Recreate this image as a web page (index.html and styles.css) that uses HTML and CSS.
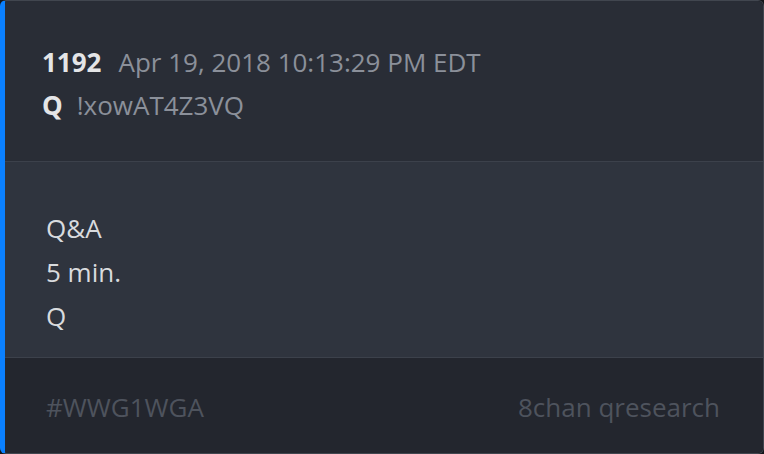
FILE: index.html
```html
<!DOCTYPE html>
<html>
<head>
<meta charset="utf-8">
<link rel="stylesheet" href="styles.css">
</head>
<body>
<div class="card">
  <div class="head">
    <div class="line"><span class="num">1192</span><span class="meta">Apr 19, 2018 10:13:29 PM EDT</span></div>
    <div class="line"><span class="num author">Q</span><span class="meta">!xowAT4Z3VQ</span></div>
  </div>
  <div class="body">
    <div class="line">Q&amp;A</div>
    <div class="line">5 min.</div>
    <div class="line">Q</div>
  </div>
  <div class="foot">
    <span>#WWG1WGA</span>
    <span>8chan qresearch</span>
  </div>
</div>
</body>
</html>
```
FILE: styles.css
```css
html, body {
  margin: 0;
  padding: 0;
  background: #14161a;
}
body {
  width: 764px;
  height: 454px;
  font-family: "Open Sans", "Noto Sans", sans-serif;
  font-size: 26px;
}
.card {
  box-sizing: border-box;
  width: 764px;
  height: 454px;
  border: 1px solid #41464f;
  border-left: 5px solid #0a80ff;
  border-radius: 6px;
  overflow: hidden;
  display: flex;
  flex-direction: column;
}
.head {
  background: #292d36;
  padding: 40px 0 34px 37px;
  line-height: 43px;
  border-bottom: 1px solid #3c414b;
}
.num {
  font-weight: 700;
  color: #e4e5e7;
  margin-right: 17px;
}
.num.author {
  margin-right: 14px;
}
.meta {
  color: #8b909a;
}
.body {
  background: #2f343e;
  padding: 44px 0 19px 41px;
  line-height: 44px;
  color: #d9dbde;
  border-bottom: 1px solid #3c414b;
}
.foot {
  flex: 1;
  background: #23262e;
  color: #4e535d;
  display: flex;
  justify-content: space-between;
  padding: 34px 43px 0 41px;
  line-height: 30px;
}
```
